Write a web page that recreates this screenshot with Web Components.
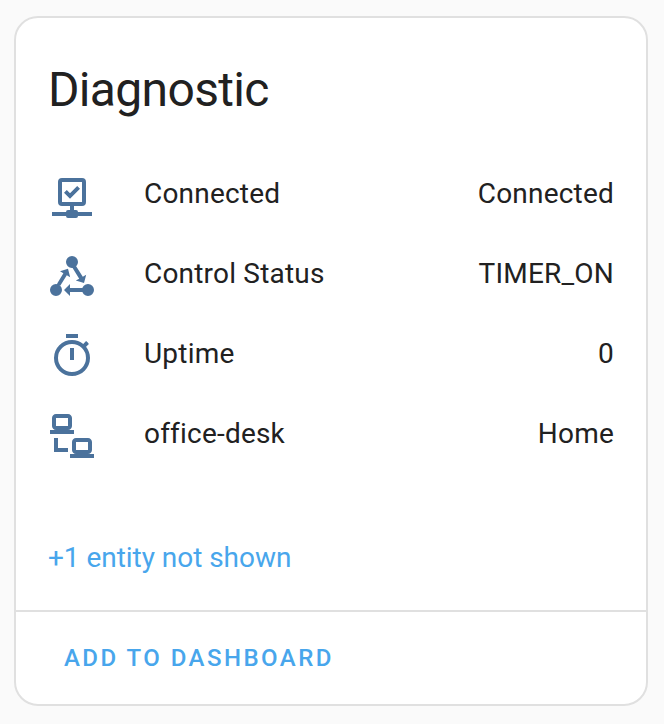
<!DOCTYPE html>
<html lang="en">
<head>
<meta charset="utf-8">
<title>Diagnostic</title>
<style>
html, body { margin: 0; height: 100%; background: #fafafa; }
body { box-sizing: border-box; padding: 16px 16px 18px 14px; font-family: Roboto, "Noto Sans", sans-serif; color: #212121; }
</style>
</head>
<body>
<diagnostic-card>
  <span slot="title">Diagnostic</span>
  <entity-row icon="network">Connected<span slot="state">Connected</span></entity-row>
  <entity-row icon="cycle">Control Status<span slot="state">TIMER_ON</span></entity-row>
  <entity-row icon="timer">Uptime<span slot="state">0</span></entity-row>
  <entity-row icon="computers">office-desk<span slot="state">Home</span></entity-row>
  <span slot="more">+1 entity not shown</span>
  <card-button slot="actions">Add to dashboard</card-button>
</diagnostic-card>
<script>
const ICONS = {
  network: 'M13 19H14A1 1 0 0 1 15 20H22V22H15A1 1 0 0 1 14 23H10A1 1 0 0 1 9 22H2V20H9A1 1 0 0 1 10 19H11V17H7A2 2 0 0 1 5 15V5A2 2 0 0 1 7 3H17A2 2 0 0 1 19 5V15A2 2 0 0 1 17 17H13V19M7 5V15H17V5H7M11 13.4L8 10.4L9.4 9L11 10.6L14.6 7L16 8.4L11 13.4Z',
  cycle: 'M12 2A3 3 0 1 0 12 8A3 3 0 1 0 12 2ZM4 16A3 3 0 1 0 4 22A3 3 0 1 0 4 16ZM20 16A3 3 0 1 0 20 22A3 3 0 1 0 20 16ZM17.5 18H11V16L8 19L11 22V20H17.5ZM6.2 16.8L9.4 11.6L11.1 12.6L10 8.4L6 9.6L7.7 10.6L4.6 15.7L4.6 17ZM14 7L12.3 8L15.6 13.4L13.9 14.3L18 15.5L19.1 11.4L17.4 12.4Z',
  timer: 'M12 20A7 7 0 0 1 5 13A7 7 0 0 1 12 6A7 7 0 0 1 19 13A7 7 0 0 1 12 20M19.03 7.39L20.45 5.97C20 5.46 19.55 5 19.04 4.56L17.62 6C16.07 4.74 14.12 4 12 4A9 9 0 0 0 3 13A9 9 0 0 0 12 22C17 22 21 17.97 21 13C21 10.88 20.26 8.93 19.03 7.39M11 14H13V8H11M15 1H9V3H15V1Z',
  computers: 'M4 1C2.89 1 2 1.89 2 3V7C2 8.11 2.89 9 4 9H1V11H13V9H10C11.11 9 12 8.11 12 7V3C12 1.89 11.11 1 10 1H4M4 3H10V7H4V3M3 13V20H10V18H5V13H3M14 13C12.89 13 12 13.89 12 15V19C12 20.11 12.89 21 14 21H11V23H23V21H20C21.11 21 22 20.11 22 19V15C22 13.89 21.11 13 20 13H14M14 15H20V19H14V15Z'
};

customElements.define('entity-icon', class extends HTMLElement {
  connectedCallback() {
    const name = this.getAttribute('name');
    // The cycle's arrows overlap its discs, so they are filled as a union.
    const rule = name === 'cycle' ? 'nonzero' : 'evenodd';
    this.attachShadow({ mode: 'open' }).innerHTML = `
      <style>:host{display:block;width:48px;height:48px;color:#4b729c}svg{display:block}</style>
      <svg width="48" height="48" viewBox="0 0 24 24" fill="currentColor" fill-rule="${rule}"><path d="${ICONS[name]}"/></svg>`;
  }
});

customElements.define('entity-row', class extends HTMLElement {
  connectedCallback() {
    this.attachShadow({ mode: 'open' }).innerHTML = `
      <style>
        :host{display:grid;grid-template-columns:48px 1fr auto;column-gap:48px;height:48px;font-size:28px;line-height:44px;letter-spacing:.2px;white-space:nowrap}
        .state{text-align:right}
      </style>
      <entity-icon name="${this.getAttribute('icon')}"></entity-icon>
      <div><slot></slot></div>
      <div class="state"><slot name="state"></slot></div>`;
  }
});

customElements.define('card-button', class extends HTMLElement {
  connectedCallback() {
    this.attachShadow({ mode: 'open' }).innerHTML = `
      <style>
        :host{display:block}
        button{display:block;border:0;background:none;margin:0;padding:0 16px;font:500 24px/72px Roboto,"Noto Sans",sans-serif;letter-spacing:2.46px;text-transform:uppercase;color:#48a6ec}
      </style>
      <button><slot></slot></button>`;
  }
});

customElements.define('diagnostic-card', class extends HTMLElement {
  connectedCallback() {
    this.attachShadow({ mode: 'open' }).innerHTML = `
      <style>
        :host{display:flex;flex-direction:column;box-sizing:border-box;height:100%;background:#fff;border:2px solid #e0e0e0;border-radius:24px;overflow:hidden}
        h1{margin:0;padding:24px 32px 0;font-size:48px;line-height:96px;font-weight:400;letter-spacing:-.66px}
        .rows{display:flex;flex-direction:column;gap:32px;padding:34px 32px 0}
        .more{padding:76px 32px 0;font-size:28px;line-height:44px;letter-spacing:-.04px;color:#48a6ec}
        footer{margin-top:auto;box-sizing:border-box;padding:10px 32px;border-top:2px solid #e0e0e0;height:94px}
      </style>
      <h1><slot name="title"></slot></h1>
      <div class="rows"><slot></slot></div>
      <div class="more"><slot name="more"></slot></div>
      <footer><slot name="actions"></slot></footer>`;
  }
});
</script>
</body>
</html>
